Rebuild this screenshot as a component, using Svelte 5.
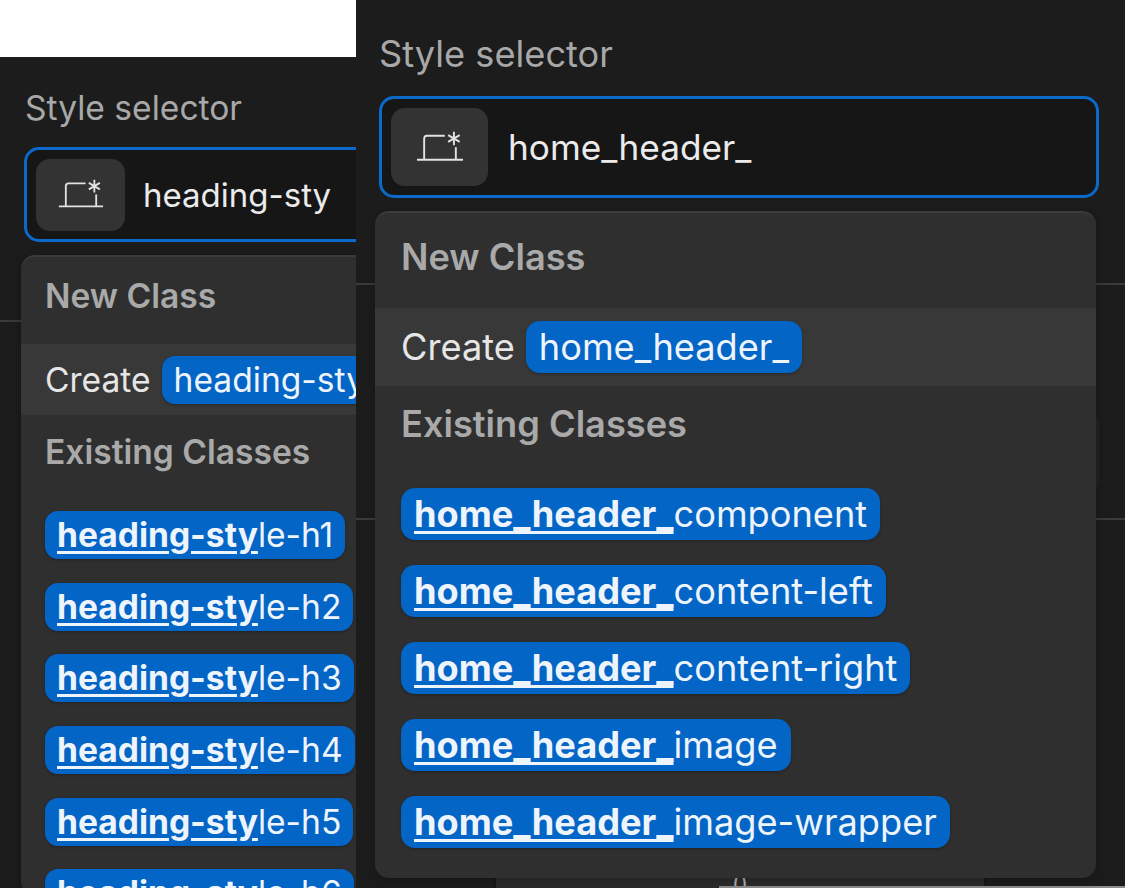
<script>
  const leftChips = ['h1', 'h2', 'h3', 'h4', 'h5', 'h6'];
  const rightChips = ['component', 'content-left', 'content-right', 'image', 'image-wrapper'];
</script>

{#snippet styleIcon(size)}
  <svg class="style-icon" width={size} height={size * 0.8} viewBox="0 0 50 40" fill="none" stroke="currentColor" stroke-width="2">
    <path d="M1 33H49" />
    <path d="M8.500 33V11a3 3 0 0 1 3-3H30" />
    <path d="M41.500 33V20" />
    <path d="M39.500 4V18M33.500 7.500 45.500 14.500M45.500 7.500 33.500 14.500" />
  </svg>
{/snippet}

<div class="collage">
  <div class="left-col">
    <div class="white-top"></div>
    <section class="panel panel-left">
      <div class="rule rule-a"></div>
      <div class="label">Style selector</div>
      <div class="selector">
        <div class="tile">{@render styleIcon(46)}</div>
        <span class="value">heading-sty</span>
      </div>
      <div class="dropdown">
        <div class="head">New Class</div>
        <div class="create">
          <span>Create</span>
          <span class="chip">heading-sty</span>
        </div>
        <div class="head existing">Existing Classes</div>
        <div class="chips">
          {#each leftChips as c}
            <div class="chip"><b>heading-sty</b>le-{c}</div>
          {/each}
        </div>
      </div>
    </section>
  </div>

  <section class="panel panel-right">
    <div class="rule rule-b"></div>
    <div class="rule rule-c"></div>
    <div class="rule rule-d"></div>
    <div class="rule rule-e"></div>
    <div class="ghost-field"></div>
    <div class="under"><span>()</span></div>
    <div class="under-line"></div>
    <div class="label">Style selector</div>
    <div class="selector">
      <div class="tile">{@render styleIcon(48)}</div>
      <span class="value">home_header_</span>
    </div>
    <div class="dropdown">
      <div class="head">New Class</div>
      <div class="create">
        <span>Create</span>
        <span class="chip">home_header_</span>
      </div>
      <div class="head existing">Existing Classes</div>
      <div class="chips">
        {#each rightChips as c}
          <div class="chip"><b>home_header_</b>{c}</div>
        {/each}
      </div>
    </div>
  </section>
</div>

<style>
  :global(body) {
    margin: 0;
    background: #fff;
  }
  .collage {
    display: flex;
    width: 1128px;
    height: 888px;
    overflow: hidden;
    background: #fff;
    font-family: Inter, 'Liberation Sans', sans-serif;
  }
  .left-col {
    width: 356px;
    flex: none;
    display: flex;
    flex-direction: column;
  }
  .white-top {
    height: 57px;
    flex: none;
    background: #fff;
  }
  .panel {
    position: relative;
    background: #1c1c1c;
    box-sizing: border-box;
    overflow: hidden;
  }
  .panel-left {
    flex: 1;
    padding: 32px 0 0 25px;
    --fs: 33.600px;
  }
  .panel-right {
    flex: none;
    width: 769px;
    padding: 35px 0 0 23px;
    --fs: 36.200px;
  }
  .rule {
    position: absolute;
    height: 2px;
    background: #3a3a3a;
  }
  .rule-a { left: 0; top: 263px; width: 22px; }
  .rule-b { left: 0; top: 283px; width: 20px; }
  .rule-c { left: 0; top: 518px; width: 20px; }
  .rule-d { left: 740px; top: 283px; width: 30px; }
  .rule-e { left: 740px; top: 518px; width: 30px; }
  .ghost-field {
    position: absolute;
    left: 700px;
    top: 417px;
    width: 43px;
    height: 72px;
    box-sizing: border-box;
    background: #232323;
    border-radius: 6px;
  }
  .under {
    position: absolute;
    left: 138px;
    top: 870px;
    width: 492px;
    height: 18px;
    box-sizing: border-box;
    background: #2b2b2b;
    border-left: 2px solid #161616;
    border-right: 2px solid #161616;
  }
  .under span {
    position: absolute;
    left: 236px;
    top: 0;
    color: #b0b0b0;
    font-size: 22px;
    line-height: 26px;
  }
  .under-line {
    position: absolute;
    left: 363px;
    top: 886px;
    width: 406px;
    height: 2px;
    background: #8c8c8c;
  }

  .label {
    position: relative;
    color: #a8a8a8;
    font-size: var(--fs);
    line-height: 38px;
  }

  .selector {
    position: relative;
    display: flex;
    align-items: center;
    box-sizing: border-box;
    border: 3px solid #0a69c9;
    border-radius: 15px;
    background: #161616;
    color: #ebebeb;
  }
  .panel-left .selector {
    width: 400px;
    height: 95px;
    margin: 20px 0 0 -1px;
    padding-left: 9px;
    gap: 18px;
  }
  .panel-right .selector {
    width: 720px;
    height: 102px;
    margin-top: 23px;
    padding-left: 9px;
    gap: 20px;
  }
  .tile {
    display: flex;
    align-items: center;
    justify-content: center;
    flex: none;
    background: #333;
    border-radius: 14px;
    color: #e2e2e2;
  }
  .panel-left .tile { width: 89px; height: 72px; }
  .panel-right .tile { width: 97px; height: 78px; }
  .style-icon { display: block; }
  .panel-left .value { font-size: 33px; white-space: nowrap; }
  .panel-right .value { font-size: 35.200px; white-space: nowrap; }

  .dropdown {
    position: relative;
    box-sizing: border-box;
    background: #2f2f2f;
    border-top: 2px solid #3b3b3b;
    border-radius: 14px;
    box-shadow: 0 2px 12px rgba(0, 0, 0, 0.25);
  }
  .panel-left .dropdown {
    width: 400px;
    height: 640px;
    margin: 13px 0 0 -4px;
  }
  .panel-right .dropdown {
    width: 721px;
    height: 667px;
    margin: 13px 0 0 -4px;
  }
  .head {
    color: #a9a9a9;
    font-weight: 600;
    font-size: var(--fs);
    line-height: 40px;
    padding-left: 24px;
  }
  .panel-left .head { padding-top: 19px; }
  .panel-right .head { padding-top: 24px; padding-left: 26px; }
  .panel-left .existing { padding-top: 17px; }
  .panel-right .existing { padding-top: 18px; }

  .create {
    display: flex;
    align-items: center;
    color: #e6e6e6;
    font-size: var(--fs);
    background: #383838;
    white-space: nowrap;
  }
  .panel-left .create { height: 71px; margin-top: 28px; padding-left: 24px; gap: 11px; }
  .panel-right .create { height: 78px; margin-top: 31px; padding-left: 26px; gap: 11px; }

  .chip {
    box-sizing: border-box;
    background: #0365c6;
    color: #eef4fb;
    font-size: var(--fs);
    white-space: nowrap;
    box-shadow: 0 1px 3px rgba(0, 0, 0, 0.3);
  }
  .chip b {
    font-weight: 700;
    text-decoration: underline;
    text-decoration-thickness: 3px;
    text-underline-offset: 4px;
    text-decoration-skip-ink: auto;
  }
  .create .chip {
    display: flex;
    align-items: center;
  }
  .panel-left .chip { height: 48px; line-height: 48px; padding: 0 12px; border-radius: 13px; }
  .panel-right .chip { height: 52px; line-height: 52px; padding: 0 13px; border-radius: 14px; }
  .chips {
    display: flex;
    flex-direction: column;
    align-items: flex-start;
  }
  .panel-left .chips { gap: 23.700px; margin: 39px 0 0 24px; }
  .panel-right .chips { gap: 25px; margin: 44px 0 0 26px; }
</style>
